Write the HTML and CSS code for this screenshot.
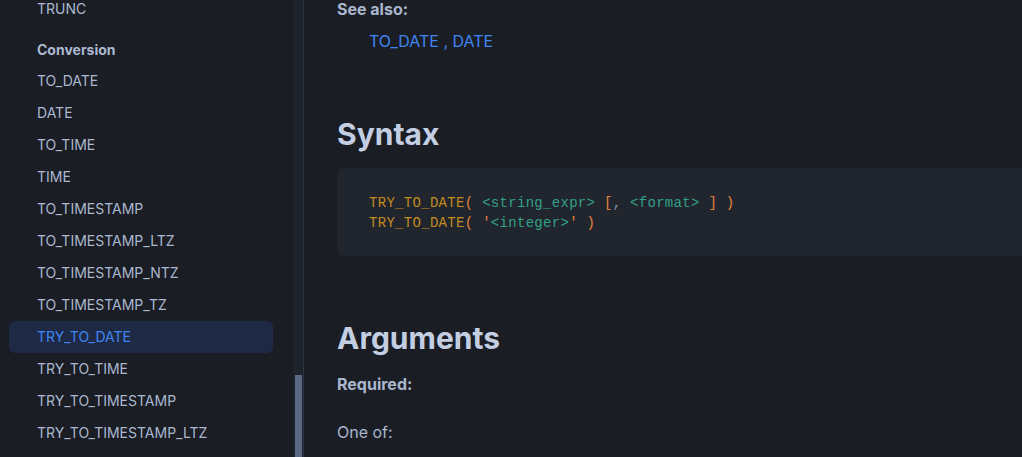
FILE: index.html
```html
<!DOCTYPE html>
<html lang="en">
<head>
<meta charset="utf-8">
<title>TRY_TO_DATE</title>
<link rel="stylesheet" href="styles.css">
</head>
<body>
<div class="app">
  <aside class="sidebar">
    <ul class="nav">
      <li class="nav-item">TRUNC</li>
      <li class="nav-section">Conversion</li>
      <li class="nav-item">TO_DATE</li>
      <li class="nav-item">DATE</li>
      <li class="nav-item">TO_TIME</li>
      <li class="nav-item">TIME</li>
      <li class="nav-item">TO_TIMESTAMP</li>
      <li class="nav-item">TO_TIMESTAMP_LTZ</li>
      <li class="nav-item">TO_TIMESTAMP_NTZ</li>
      <li class="nav-item">TO_TIMESTAMP_TZ</li>
      <li class="nav-item active">TRY_TO_DATE</li>
      <li class="nav-item">TRY_TO_TIME</li>
      <li class="nav-item">TRY_TO_TIMESTAMP</li>
      <li class="nav-item">TRY_TO_TIMESTAMP_LTZ</li>
    </ul>
  </aside>
  <div class="scrollbar"><div class="scroll-space"></div><div class="scroll-thumb"></div></div>
  <main class="content">
    <p class="label">See also:</p>
    <p class="see-also"><a>TO_DATE</a> , <a>DATE</a></p>
    <h2 class="h-syntax">Syntax</h2>
    <pre class="code"><span class="fn">TRY_TO_DATE</span><span class="p">(</span> <span class="arg">&lt;string_expr&gt;</span> <span class="p">[</span><span class="c">,</span> <span class="arg">&lt;format&gt;</span> <span class="p">]</span> <span class="p">)</span>
<span class="fn">TRY_TO_DATE</span><span class="p">(</span> <span class="p">'</span><span class="arg">&lt;integer&gt;</span><span class="p">'</span> <span class="p">)</span></pre>
    <h2 class="h-args">Arguments</h2>
    <p class="label required">Required:</p>
    <p class="body-text">One of:</p>
  </main>
</div>
</body>
</html>
```
FILE: styles.css
```css
* { box-sizing: border-box; }
html, body { margin: 0; padding: 0; }
body {
  width: 1022px;
  height: 457px;
  overflow: hidden;
  background: #1a1d24;
  font-family: Inter, "Noto Sans", "Liberation Sans", sans-serif;
  color: #aab7cf;
}
.app {
  display: flex;
  height: 457px;
}
.sidebar {
  width: 293px;
  flex: none;
  background: #1a1d24;
  overflow: hidden;
}
.nav {
  list-style: none;
  margin: -7px 0 0 0;
  padding: 0;
}
.nav-item, .nav-section {
  height: 32px;
  line-height: 32px;
  font-size: 14px;
  padding-left: 28px;
  margin: 0 20px 0 9px;
  border-radius: 6px;
  color: #abb8d0;
  white-space: nowrap;
}
.nav-section {
  margin-top: 8px;
  font-weight: 700;
  line-height: 34px;
}
.nav-item.active {
  background: #1e2a45;
  color: #3f86f2;
}
.scrollbar {
  width: 11px;
  flex: none;
  background: #1e222a;
  border-right: 1px solid #2c3447;
  display: flex;
  flex-direction: column;
  align-items: center;
  padding-left: 1px;
}
.scroll-space { height: 375px; flex: none; }
.scroll-thumb {
  flex: 1;
  width: 7px;
  background: #5c6782;
}
.content {
  flex: 1;
  overflow: hidden;
  padding-left: 33px;
  padding-top: 1px;
}
.label {
  margin: -2px 0 0 0;
  font-size: 16px;
  line-height: 20px;
  font-weight: 700;
  color: #a9b6ce;
}
.see-also {
  margin: 10px 0 0 32px;
  font-size: 16px;
  line-height: 24px;
  color: #3f86f2;
}
.see-also a { color: #3f86f2; }
h2 {
  margin: 0;
  font-size: 30px;
  line-height: 40px;
  font-weight: 700;
  color: #c3cee2;
}
.h-syntax { margin-top: 61px; }
.code {
  margin: 14px 0 0 0;
  width: 760px;
  height: 88px;
  padding: 25px 32px 0;
  background: #20252e;
  border-radius: 6px;
  font-family: "Liberation Mono", "DejaVu Sans Mono", monospace;
  font-size: 14px;
  letter-spacing: 0.3px;
  line-height: 20px;
  color: #3aa58a;
}
.fn { color: #c28b1f; }
.p { color: #e5823a; }
.c { color: #8a93a6; }
.arg { color: #33a088; }
.h-args { margin-top: 62px; }
.required { margin-top: 16px; }
.body-text {
  margin: 26px 0 0 0;
  font-size: 16px;
  line-height: 24px;
  color: #a9b6ce;
}
```
